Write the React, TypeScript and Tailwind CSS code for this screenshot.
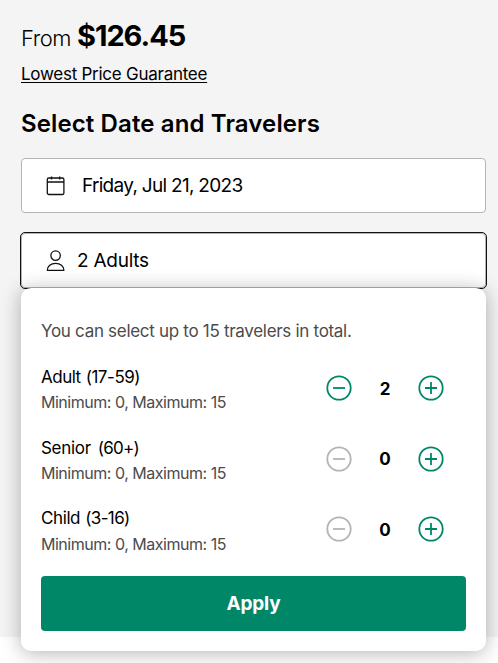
import { useState } from 'react';

interface Band {
  id: string;
  label: string;
  ages: string;
  count: number;
  labelStyle: string;
  agesStyle: string;
}

const MAX_TRAVELERS = 15;

const initialBands: Band[] = [
  { id: 'adult', label: 'Adult', ages: '(17-59)', count: 2, labelStyle: 'tracking-[-0.5px]', agesStyle: 'ml-[5px] tracking-[-0.45px]' },
  { id: 'senior', label: 'Senior', ages: '(60+)', count: 0, labelStyle: 'tracking-[-0.3px]', agesStyle: 'ml-[7px] tracking-[-0.75px]' },
  { id: 'child', label: 'Child', ages: '(3-16)', count: 0, labelStyle: 'tracking-[-0.4px]', agesStyle: 'ml-[5px] tracking-[-0.6px]' },
];

function CalendarIcon() {
  return (
    <svg width="20" height="20" viewBox="0 0 20 20" fill="none" stroke="#111" strokeWidth="1.3" className="shrink-0">
      <rect x="1.3" y="2" width="16.6" height="16.5" rx="1.6" />
      <path d="M1.3 6h16.6M5.5 0.6v3M13.7 0.6v3" />
    </svg>
  );
}

function PersonIcon() {
  return (
    <svg width="20" height="22" viewBox="0 0 20 22" fill="none" stroke="#111" strokeWidth="1.3" className="shrink-0">
      <circle cx="9.6" cy="5.6" r="4.7" />
      <path d="M1.3 20.3c0-4.3 3.6-7 8.3-7s8.3 2.7 8.3 7z" strokeLinejoin="round" />
    </svg>
  );
}

function StepButton({ plus, disabled, onClick }: { plus?: boolean; disabled?: boolean; onClick: () => void }) {
  return (
    <button
      type="button"
      onClick={onClick}
      disabled={disabled}
      aria-label={plus ? 'Increase' : 'Decrease'}
      className={disabled ? 'text-[#b4b4b4]' : 'text-[#008768]'}
    >
      <svg width="26" height="26" viewBox="0 0 26 26" fill="none" stroke="currentColor" strokeWidth="1.8" className="block">
        <circle cx="13" cy="13" r="11.7" />
        <path d={plus ? 'M7 13h12M13 7v12' : 'M7 13h12'} />
      </svg>
    </button>
  );
}

export default function App() {
  const [bands, setBands] = useState(initialBands);
  const total = bands.reduce((sum, band) => sum + band.count, 0);

  const change = (id: string, step: number) => {
    setBands(bands.map((band) => (band.id === id ? { ...band, count: band.count + step } : band)));
  };

  return (
    <div className="h-[663px] overflow-hidden bg-white font-[Inter,sans-serif] text-black">
      <div className="h-[637px] bg-[#f4f4f4] pl-[21px] pr-3 pt-[18px]">
        <div className="flex h-9 items-baseline">
          <span className="text-[22px] font-[350] leading-9 tracking-[-0.5px]">From</span>
          <span className="ml-[6px] text-[29px] font-bold leading-9 tracking-[-1.05px]">$126.45</span>
        </div>
        <a href="#" className="mt-2 block w-fit text-[17px] leading-6 tracking-[-0.26px] underline decoration-1 underline-offset-2">
          Lowest Price Guarantee
        </a>
        <h2 className="mt-[22px] text-2xl font-semibold leading-8 tracking-[0.12px]">Select Date and Travelers</h2>

        <button
          type="button"
          className="mt-[18px] flex h-[55px] w-full items-center rounded border border-[#b4b4b4] bg-white pl-6 text-left text-[19px] tracking-[-0.7px]"
        >
          <CalendarIcon />
          <span className="ml-4 pt-0.5">Friday, Jul 21, 2023</span>
        </button>

        <div className="relative mt-5">
          <button
            type="button"
            className="flex h-[55px] w-full items-center rounded border border-[#b4b4b4] bg-white pl-6 text-left text-[19px] tracking-[-0.25px] outline-1 outline-[#111]"
          >
            <PersonIcon />
            <span className="ml-[11px] pt-0.5">2 Adults</span>
          </button>

          <div className="absolute left-0 top-[55px] h-[363px] w-[465px] rounded-[10px] bg-white px-5 pt-[31px] shadow-[0_2px_20px_rgba(0,0,0,0.3)]">
            <p className="text-[17px] leading-6 tracking-[-0.3px] text-[#4b4b4b]">You can select up to 15 travelers in total.</p>
            <div className="mt-[22px]">
              {bands.map((band) => (
                <div key={band.id} className="flex h-[70.7px] justify-between pr-[22px]">
                  <div>
                    <div className="flex text-[17px] leading-6">
                      <span className={band.labelStyle}>{band.label}</span>
                      <span className={band.agesStyle}>{band.ages}</span>
                    </div>
                    <p className="mt-[1.2px] text-base leading-6 tracking-[-0.48px] text-[#4b4b4b]">
                      Minimum: 0, Maximum: {MAX_TRAVELERS}
                    </p>
                  </div>
                  <div className="flex h-[46px] items-center">
                    <StepButton disabled={band.count === 0} onClick={() => change(band.id, -1)} />
                    <span className="w-[66px] pt-[3px] text-center text-[17px] font-bold">{band.count}</span>
                    <StepButton plus disabled={total >= MAX_TRAVELERS} onClick={() => change(band.id, 1)} />
                  </div>
                </div>
              ))}
            </div>
            <button type="button" className="-mt-px h-[55px] w-full rounded bg-[#008768] pt-0.5 text-[19px] font-bold tracking-[-0.2px] text-white">
              Apply
            </button>
          </div>
        </div>
      </div>
    </div>
  );
}
